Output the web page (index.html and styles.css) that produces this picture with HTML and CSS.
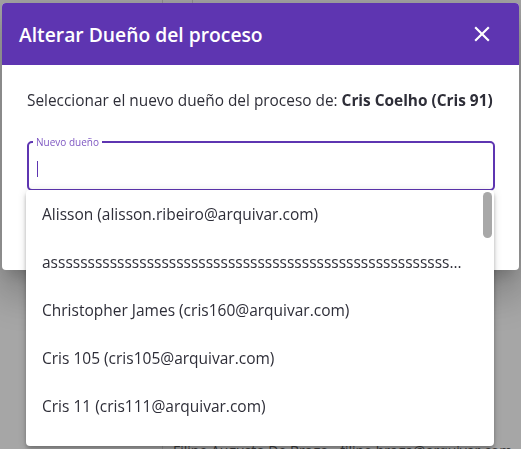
FILE: index.html
```html
<!DOCTYPE html>
<html lang="es">
<head>
<meta charset="utf-8">
<title>Alterar Dueño del proceso</title>
<link rel="stylesheet" href="styles.css">
</head>
<body>
<div class="page">
  <div class="page-top">
    <span class="col col-a"></span>
  </div>
  <div class="page-row">Filipe Augusto De Brago - filipe.braga@arquivar.com</div>
</div>

<div class="dialog">
  <header class="dialog-header">
    <h2 class="dialog-title">Alterar Dueño del proceso</h2>
    <button class="close-btn" aria-label="Cerrar">
      <svg viewBox="0 0 24 24" width="26" height="26"><path fill="#fff" d="M19 6.41L17.59 5 12 10.59 6.41 5 5 6.41 10.59 12 5 17.59 6.41 19 12 13.41 17.59 19 19 17.59 13.41 12z"/></svg>
    </button>
  </header>
  <div class="dialog-body">
    <p class="intro">Seleccionar el nuevo dueño del proceso de: <strong>Cris Coelho (Cris 91)</strong></p>
    <fieldset class="field">
      <legend class="field-label">Nuevo dueño</legend>
      <span class="caret"></span>
    </fieldset>
  </div>

  <div class="panel">
    <ul class="options">
      <li class="option">Alisson (alisson.ribeiro@arquivar.com)</li>
      <li class="option">asssssssssssssssssssssssssssssssssssssssssssssssssssssssssssssssssssssssssssss</li>
      <li class="option">Christopher James (cris160@arquivar.com)</li>
      <li class="option">Cris 105 (cris105@arquivar.com)</li>
      <li class="option">Cris 11 (cris111@arquivar.com)</li>
      <li class="option">Cris 12 (cris12@arquivar.com)</li>
    </ul>
    <div class="scroll-track"><span class="scroll-thumb"></span></div>
  </div>
</div>
</body>
</html>
```

FILE: styles.css
```css
* { box-sizing: border-box; }

html, body {
  margin: 0;
  padding: 0;
}

body {
  width: 521px;
  height: 449px;
  overflow: hidden;
  background: #a6a6a6;
  font-family: "Open Sans", "Noto Sans", sans-serif;
  color: #2e2e38;
}

.page {
  height: 449px;
  display: flex;
  flex-direction: column;
  justify-content: space-between;
}

.page-top {
  display: flex;
  height: 6px;
}

.col-a {
  margin-left: 162px;
  width: 31px;
  border-left: 1px solid #8f8f8f;
  border-right: 1px solid #8f8f8f;
}

.page-row {
  margin-left: 162px;
  padding: 4px 0 0 10px;
  height: 12px;
  border-left: 1px solid #8f8f8f;
  font-size: 14px;
  line-height: 20px;
  color: #3a3a3a;
  white-space: nowrap;
  overflow: hidden;
}

.dialog {
  position: fixed;
  left: 2px;
  top: 3px;
  width: 517px;
  height: 267px;
  background: #fff;
  border-radius: 4px;
  box-shadow: 0 11px 15px -7px rgba(0,0,0,.2), 0 24px 38px 3px rgba(0,0,0,.14), 0 9px 46px 8px rgba(0,0,0,.12);
}

.dialog-header {
  height: 62px;
  background: #5e35b1;
  border-radius: 4px 4px 0 0;
  display: flex;
  align-items: center;
  justify-content: space-between;
  padding: 0 24px 0 17px;
}

.dialog-title {
  margin: 0;
  color: #fff;
  font-size: 19.3px;
  font-weight: 600;
}

.close-btn {
  border: 0;
  background: none;
  padding: 0;
  width: 26px;
  height: 26px;
  display: flex;
  align-items: center;
  justify-content: center;
}

.dialog-body {
  padding: 26px 24px 0 25px;
}

.intro {
  margin: 0;
  font-size: 15.4px;
  line-height: 20px;
  white-space: nowrap;
}

.intro strong {
  font-weight: 700;
}

.field {
  margin: 26px 0 0 0;
  height: 54px;
  border: 2px solid #5e35b1;
  border-radius: 5px;
  padding: 0 0 0 8px;
  display: flex;
  align-items: center;
}

.field-label {
  font-size: 10px;
  color: #7e57c2;
  padding: 0 3px;
  margin-left: -4px;
  line-height: 10px;
}

.caret {
  display: block;
  width: 1px;
  height: 16px;
  background: #5e35b1;
  margin-top: 1px;
}

.panel {
  position: absolute;
  left: 24px;
  top: 187px;
  width: 468px;
  height: 256px;
  background: #fff;
  border-radius: 4px;
  box-shadow: 0 2px 4px -1px rgba(0,0,0,.2), 0 4px 5px 0 rgba(0,0,0,.14), 0 1px 10px 0 rgba(0,0,0,.12);
  display: flex;
  overflow: hidden;
}

.options {
  list-style: none;
  margin: 0;
  padding: 0;
  flex: 1;
  min-width: 0;
}

.option {
  height: 48px;
  line-height: 48px;
  padding: 0 16px;
  font-size: 15.5px;
  white-space: nowrap;
  overflow: hidden;
  text-overflow: ellipsis;
}

.scroll-track {
  width: 16px;
  padding: 2px 0 0 5px;
}

.scroll-thumb {
  display: block;
  width: 9px;
  height: 46px;
  border-radius: 5px;
  background: #a8a8a8;
}
```
